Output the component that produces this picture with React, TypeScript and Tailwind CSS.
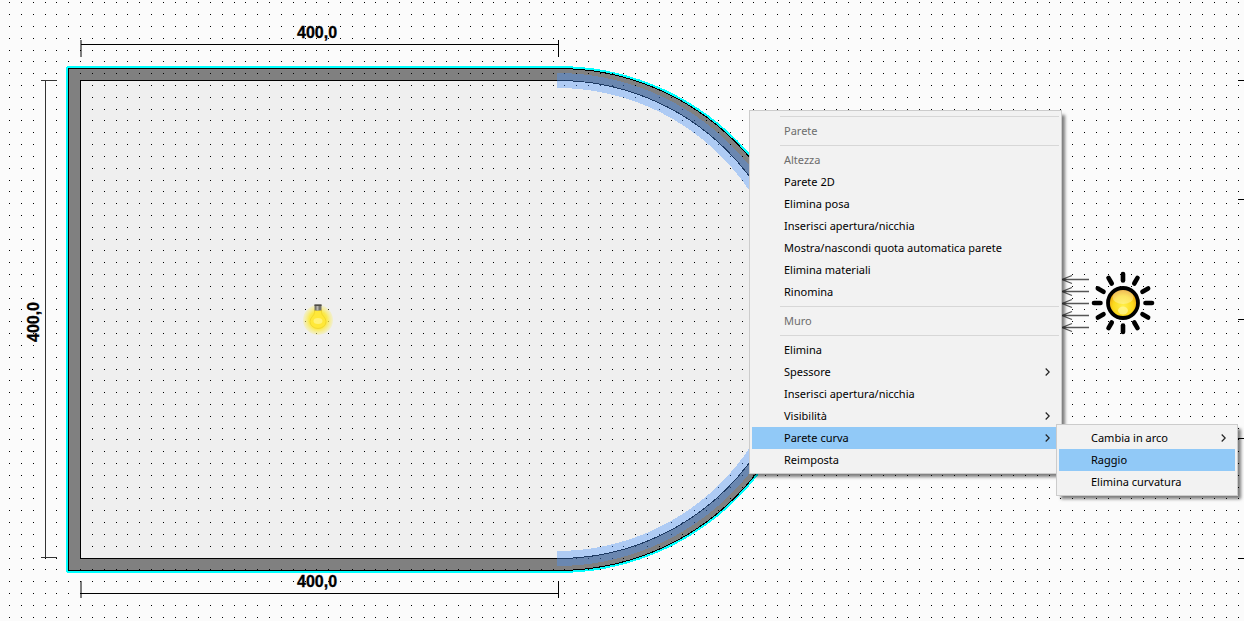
import { ReactNode } from "react";
import clsx from "clsx";

type MenuEntry = {
  label?: string;
  disabled?: boolean;
  active?: boolean;
  separator?: boolean;
  children?: MenuEntry[];
  arrow?: boolean;
};

const wallMenu: MenuEntry[] = [
  { separator: true },
  { label: "Parete", disabled: true },
  { separator: true },
  { label: "Altezza", disabled: true },
  { label: "Parete 2D" },
  { label: "Elimina posa" },
  { label: "Inserisci apertura/nicchia" },
  { label: "Mostra/nascondi quota automatica parete" },
  { label: "Elimina materiali" },
  { label: "Rinomina" },
  { separator: true },
  { label: "Muro", disabled: true },
  { separator: true },
  { label: "Elimina" },
  { label: "Spessore", arrow: true },
  { label: "Inserisci apertura/nicchia" },
  { label: "Visibilità", arrow: true },
  {
    label: "Parete curva",
    arrow: true,
    active: true,
    children: [
      { label: "Cambia in arco", arrow: true },
      { label: "Raggio", active: true },
      { label: "Elimina curvatura" },
    ],
  },
  { label: "Reimposta" },
];

const GRID_STEP = 11.812;

function buildGrid(width: number, height: number) {
  let d = "";
  for (let y = 2.84; y < height; y += GRID_STEP) {
    for (let x = 9.7; x < width; x += GRID_STEP) {
      d += `M${Math.floor(x)} ${Math.floor(y)}h1v1h-1z`;
    }
  }
  return d;
}

const gridPath = buildGrid(2600, 1500);

function Chevron() {
  return (
    <svg className="h-2 w-[5px]" viewBox="0 0 5 8" fill="none" stroke="#222" strokeWidth="1.2">
      <path d="M0.7 0.5 4.2 4 0.7 7.5" />
    </svg>
  );
}

function Menu({ entries, className }: { entries: MenuEntry[]; className?: string }) {
  return (
    <ul
      role="menu"
      className={clsx(
        "absolute border border-[#ccc] bg-[#f2f2f2] p-[2px] shadow-[4px_4px_3px_-1px_rgba(0,0,0,0.5)]",
        className
      )}
    >
      {entries.map((entry, i) =>
        entry.separator ? (
          <li key={i} role="separator" className="ml-7 flex h-[7px] items-center">
            <span className="h-px w-full bg-[#d7d7d7]" />
          </li>
        ) : (
          <li key={i} role="none" className="relative">
            <button
              type="button"
              role="menuitem"
              disabled={entry.disabled}
              className={clsx(
                "flex h-[22px] w-full items-center justify-between pl-8 pr-[9px] text-left text-[11px] leading-[22px] whitespace-nowrap",
                entry.disabled ? "text-[#6d6d6d]" : "text-black",
                entry.active && "bg-[#91c9f7]"
              )}
            >
              {entry.label}
              {entry.arrow && <Chevron />}
            </button>
            {entry.children && (
              <Menu entries={entry.children} className="-top-[3px] left-full -ml-[3px] w-[182px]" />
            )}
          </li>
        )
      )}
    </ul>
  );
}

function Label({ children, transform }: { children: ReactNode; transform: string }) {
  return (
    <text
      transform={transform}
      textAnchor="middle"
      stroke="#000"
      strokeWidth="0.3"
      className="fill-black font-['Liberation_Sans',sans-serif] text-[16px] font-bold"
    >
      {children}
    </text>
  );
}

function Sun() {
  return (
    <g transform="translate(1123 303)">
      {/* Raggi */}
      {Array.from({ length: 12 }, (_, i) => (
        <path key={i} d="M0 -22.5V-29" transform={`rotate(${i * 30})`} stroke="#000" strokeWidth="4.6" strokeLinecap="round" />
      ))}
      <circle r="15" fill="url(#sun)" stroke="#000" strokeWidth="3.8" />
      <ellipse cy="-6" rx="10.5" ry="7" fill="#fff" opacity="0.3" />
      <ellipse cy="7.5" rx="5" ry="4" fill="#fffbb0" opacity="0.6" />
      {/* Frecce verso la parete */}
      {[-23.5, -11.5, 0.5, 12.5, 24.5].map((y) => (
        <path key={y} d={`M-34 ${y}H-61M-51 ${y - 4}L-61 ${y}L-51 ${y + 4}`} fill="none" stroke="#555" strokeWidth="1.3" />
      ))}
    </g>
  );
}

function Bulb() {
  return (
    <g transform="translate(318 320)">
      <circle r="15" fill="url(#glow)" />
      <path d="M-3.5 -10h7v2.5c0 3 4.5 5 4.5 9a8 7 0 0 1-16 0c0-4 4.5-6 4.5-9z" fill="#ffe838" stroke="#ecd02a" strokeWidth="0.7" />
      <ellipse cy="1" rx="4.5" ry="3" fill="#fff27a" />
      <path d="M-3.5 -15.5h7v6h-7z" fill="#77746a" />
      <path d="M-1.5 -15.5h2v6h-2z" fill="#b9b6ae" />
      <path d="M-3.5 -15.5h7v1.5h-7z" fill="#4d4b45" />
    </g>
  );
}

function FloorPlan() {
  return (
    <svg className="absolute inset-0 h-full w-full" aria-label="Pianta">
      <defs>
        <radialGradient id="sun" cx="0.5" cy="0.6" r="0.6">
          <stop offset="0" stopColor="#fff04a" />
          <stop offset="0.55" stopColor="#fbd91c" />
          <stop offset="1" stopColor="#e38a0a" />
        </radialGradient>
        <radialGradient id="glow">
          <stop offset="0" stopColor="#ffe100" />
          <stop offset="0.6" stopColor="#fce93c" stopOpacity="0.9" />
          <stop offset="1" stopColor="#f6ee90" stopOpacity="0.35" />
        </radialGradient>
      </defs>

      {/* Muro */}
      <g shapeRendering="crispEdges">
        <path
          d="M558 571.5H67.5V67.5H558A252 252 0 0 1 558 571.5Z"
          fill="#808080"
          stroke="#0ff"
          strokeWidth="3"
          strokeLinejoin="bevel"
        />
        <path d="M558 570.5H68.5V68.5H558A251 251 0 0 1 558 570.5Z" fill="#808080" stroke="#000" />
        <path d="M558 558.5H80.5V80.5H558A239 239 0 0 1 558 558.5Z" fill="#efefef" stroke="#000" />
      </g>

      <path d={gridPath} shapeRendering="crispEdges" />

      {/* Selezione della parete curva */}
      <path
        d="M557 73A246.5 246.5 0 0 1 557 566V551A231.5 231.5 0 0 0 557 88Z"
        fill="#4892fc"
        fillOpacity="0.39"
        shapeRendering="crispEdges"
      />

      {/* Quote */}
      <path
        d="M81 44.5H558M81 40V57M558.5 40V57M81 593.5H558M81 581V598M558.5 581V598M1238 80.5h2000M1238 199.5h2000M1238 319.5h2000M1238 438.5h2000M1238 558.5h2000"
        stroke="#000"
      />
      <path d="M45.5 80V558M41 80.5H57M41 557.5H57" stroke="#333" />
      <Label transform="translate(317 38)">400,0</Label>
      <Label transform="translate(317 587)">400,0</Label>
      <Label transform="translate(39 322) rotate(-90)">400,0</Label>

      <Bulb />
      <Sun />
    </svg>
  );
}

export default function App() {
  return (
    <main className="relative min-h-screen w-full overflow-hidden bg-[#fbfbfb] font-['Noto_Sans',sans-serif]">
      <FloorPlan />
      <Menu entries={wallMenu} className="top-[110px] left-[749px] w-[313px]" />
    </main>
  );
}
